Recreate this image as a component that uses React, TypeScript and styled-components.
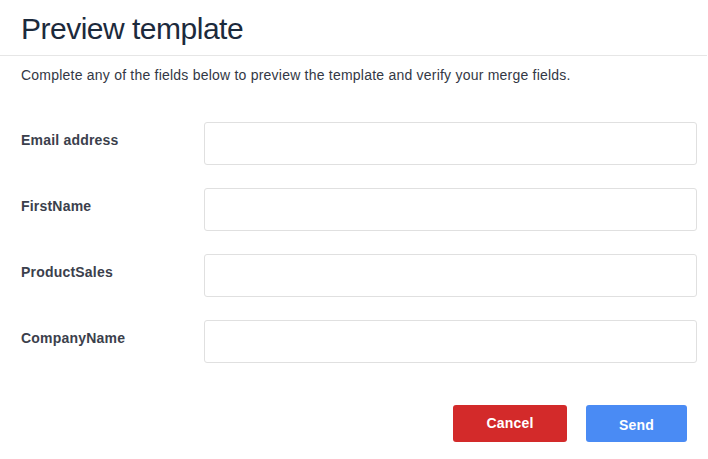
import React from "react";
import styled, { createGlobalStyle } from "styled-components";

const Global = createGlobalStyle`
  html, body { margin: 0; padding: 0; background: #fff; }
  body { font-family: "Liberation Sans", Arial, sans-serif; }
  * { box-sizing: border-box; }
`;

const Page = styled.div`
  width: 708px;
  height: 459px;
  background: #fff;
  display: flex;
  flex-direction: column;
`;

const Header = styled.header`
  padding: 14px 21px 11px 21px;
  border-bottom: 1px solid #e6e6e6;
  margin-right: 1px;
`;

const Title = styled.h1`
  margin: 0;
  font-size: 30px;
  line-height: 30px;
  font-weight: 400;
  letter-spacing: -0.5px;
  color: #1c2a3c;
`;

const Intro = styled.p`
  margin: 9px 0 0 21px;
  font-size: 14px;
  line-height: 20px;
  letter-spacing: 0.22px;
  color: #333845;
`;

const Form = styled.form`
  display: flex;
  flex-direction: column;
  gap: 23px;
  margin-top: 37px;
  padding: 0 11px 0 21px;
`;

const Row = styled.div`
  display: grid;
  grid-template-columns: 183px 1fr;
  align-items: start;
`;

const Label = styled.label`
  padding-top: 8px;
  font-size: 14px;
  line-height: 20px;
  font-weight: 700;
  letter-spacing: 0.2px;
  color: #3b404c;
`;

const Input = styled.input`
  height: 43px;
  width: 100%;
  border: 1px solid #e0e0e0;
  border-radius: 3px;
  background: #fff;
  outline: none;
  font: inherit;
  padding: 0 10px;
`;

const Actions = styled.div`
  display: flex;
  justify-content: flex-end;
  gap: 19px;
  margin-top: 42px;
  padding-right: 21px;
`;

const Button = styled.button<{ $variant: "danger" | "primary"; $w: number }>`
  width: ${(p) => p.$w}px;
  height: 37px;
  border: none;
  border-radius: 3px;
  font-family: "Liberation Sans", Arial, sans-serif;
  font-size: 14px;
  font-weight: 700;
  letter-spacing: 0.2px;
  color: #fff;
  background: ${(p) => (p.$variant === "danger" ? "#d32a2a" : "#4a8bf4")};
  padding: ${(p) => (p.$variant === "danger" ? "0 0 2px 0" : "2px 0 0 0")};
  cursor: pointer;
`;

const fields = ["Email address", "FirstName", "ProductSales", "CompanyName"];

export default function App() {
  return (
    <Page>
      <Global />
      <Header>
        <Title>Preview template</Title>
      </Header>
      <Intro>Complete any of the fields below to preview the template and verify your merge fields.</Intro>
      <Form onSubmit={(e) => e.preventDefault()}>
        {fields.map((f) => (
          <Row key={f}>
            <Label>{f}</Label>
            <Input type="text" aria-label={f} />
          </Row>
        ))}
      </Form>
      <Actions>
        <Button type="button" $variant="danger" $w={114}>Cancel</Button>
        <Button type="button" $variant="primary" $w={101}>Send</Button>
      </Actions>
    </Page>
  );
}
